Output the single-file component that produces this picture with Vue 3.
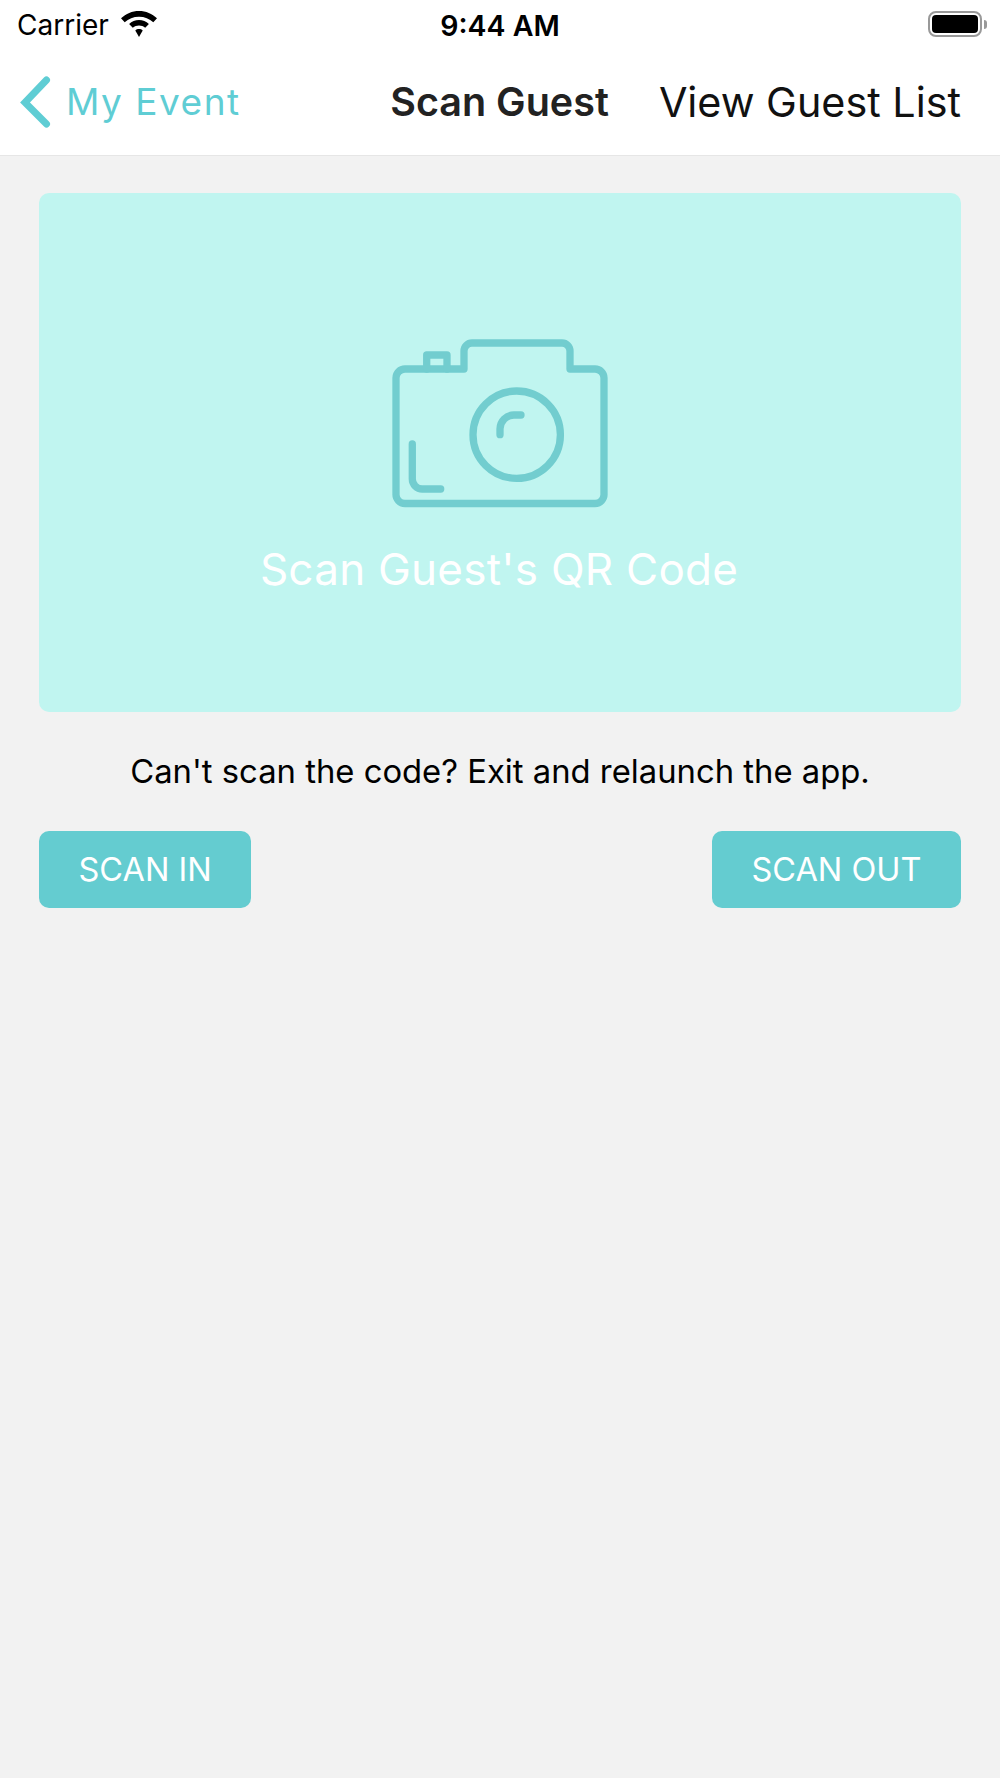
<template>
  <div class="screen">
    <div class="status-bar">
      <div class="status-left">
        <span class="carrier">Carrier</span>
        <svg class="wifi" width="38" height="28" viewBox="0 0 38 28">
          <path d="M19 1C12 1 6 3.600 1 8.300L4.700 12.300C8.500 8.700 13.500 6.700 19 6.700C24.500 6.700 29.500 8.700 33.300 12.300L37 8.300C32 3.600 26 1 19 1Z" fill="#000" />
          <path d="M19 10C15.300 10 11.800 11.400 9.100 13.900L12.800 17.800C14.500 16.300 16.700 15.500 19 15.500C21.300 15.500 23.500 16.300 25.200 17.800L28.900 13.900C26.200 11.400 22.700 10 19 10Z" fill="#000" />
          <path d="M19 19C17.600 19 16.300 19.500 15.300 20.400L19 27L22.700 20.400C21.700 19.500 20.400 19 19 19Z" fill="#000" />
        </svg>
      </div>
      <span class="clock">9:44 AM</span>
      <div class="battery">
        <div class="battery-shell"><div class="battery-fill"></div></div>
        <div class="battery-tip"></div>
      </div>
    </div>

    <div class="nav-bar">
      <div class="back">
        <svg class="chevron" width="32" height="52" viewBox="0 0 32 52">
          <path d="M26.500 4L5 26.500L26.500 48" fill="none" stroke="#5fcdd4" stroke-width="7" stroke-linecap="round" stroke-linejoin="miter" />
        </svg>
        <span class="back-label">My Event</span>
      </div>
      <div class="tabs">
        <span class="tab active">Scan Guest</span>
        <span class="tab">View Guest List</span>
      </div>
    </div>

    <div class="content">
      <div class="scan-panel">
        <svg class="camera" width="220" height="175" viewBox="0 0 220 175">
          <g fill="none" stroke="#72cdcf" stroke-width="7.300" stroke-linecap="round" stroke-linejoin="round">
            <path d="M15 34H74V16A8 8 0 0 1 82 8H172A8 8 0 0 1 180 16V34H205A9 9 0 0 1 214 43V159A9 9 0 0 1 205 168.500H15A9 9 0 0 1 6 159V43A9 9 0 0 1 15 34Z" />
            <path d="M36.700 34V20H57V34" />
            <circle cx="126.700" cy="99.700" r="43.700" />
            <path d="M110 99.700V94A14 14 0 0 1 124 80H131" />
            <path d="M22.300 109V144A10 10 0 0 0 32.300 154H50.700" />
          </g>
        </svg>
        <span class="scan-label">Scan Guest's QR Code</span>
      </div>
      <p class="hint">Can't scan the code? Exit and relaunch the app.</p>
      <div class="actions">
        <button class="action">SCAN IN</button>
        <button class="action">SCAN OUT</button>
      </div>
    </div>
  </div>
</template>

<script setup>
</script>

<style>
body {
  margin: 0;
  background: #f2f2f2;
}
</style>

<style scoped>
.screen {
  width: 1000px;
  height: 1778px;
  display: flex;
  flex-direction: column;
  background: #f2f2f2;
  font-family: Inter, 'Liberation Sans', sans-serif;
}

.status-bar {
  height: 50px;
  background: #fff;
  display: flex;
  align-items: center;
  justify-content: space-between;
  padding: 0 13px 0 17px;
  position: relative;
}

.status-left {
  display: flex;
  align-items: center;
  gap: 11px;
}

.carrier {
  font-size: 28px;
  color: #000;
}

.wifi {
  margin-top: -2px;
}

.clock {
  position: absolute;
  left: 0;
  right: 0;
  text-align: center;
  font-size: 28.500px;
  font-weight: 600;
  color: #000;
}

.battery {
  display: flex;
  align-items: center;
  gap: 2px;
  margin-top: -2px;
}

.battery-shell {
  width: 54px;
  height: 26px;
  box-sizing: border-box;
  border: 2px solid #999;
  border-radius: 8px;
  padding: 2px;
}

.battery-fill {
  height: 100%;
  background: #000;
  border-radius: 4px;
}

.battery-tip {
  width: 3px;
  height: 9px;
  background: #999;
  border-radius: 0 3px 3px 0;
}

.nav-bar {
  height: 103px;
  background: #fff;
  border-bottom: 1px solid #e6e6e6;
  display: flex;
  align-items: center;
  justify-content: space-between;
  padding: 0 39px 2px 20px;
}

.back {
  display: flex;
  align-items: center;
  gap: 14px;
  color: #5fcdd4;
}

.back-label {
  font-size: 37px;
  letter-spacing: 1.500px;
}

.tabs {
  display: flex;
  align-items: center;
  gap: 50px;
  font-size: 41.300px;
  color: #111;
}

.tab.active {
  font-size: 39.500px;
  font-weight: 600;
  color: #222;
}

.content {
  padding: 37px 39px 0;
  display: flex;
  flex-direction: column;
}

.scan-panel {
  height: 519px;
  background: #c0f5f0;
  border-radius: 10px;
  display: flex;
  flex-direction: column;
  align-items: center;
}

.camera {
  margin-top: 142px;
}

.scan-label {
  margin-top: 32px;
  margin-right: 2px;
  font-size: 44px;
  letter-spacing: 0.250px;
  color: #fff;
}

.hint {
  margin: 39px 0 0;
  text-align: center;
  font-size: 32.800px;
  color: #000;
}

.actions {
  margin-top: 40px;
  display: flex;
  justify-content: space-between;
}

.action {
  height: 77px;
  padding: 0 39.500px;
  border: none;
  border-radius: 10px;
  background: #64ccd0;
  color: #fff;
  font-family: inherit;
  font-size: 32.500px;
}
</style>
